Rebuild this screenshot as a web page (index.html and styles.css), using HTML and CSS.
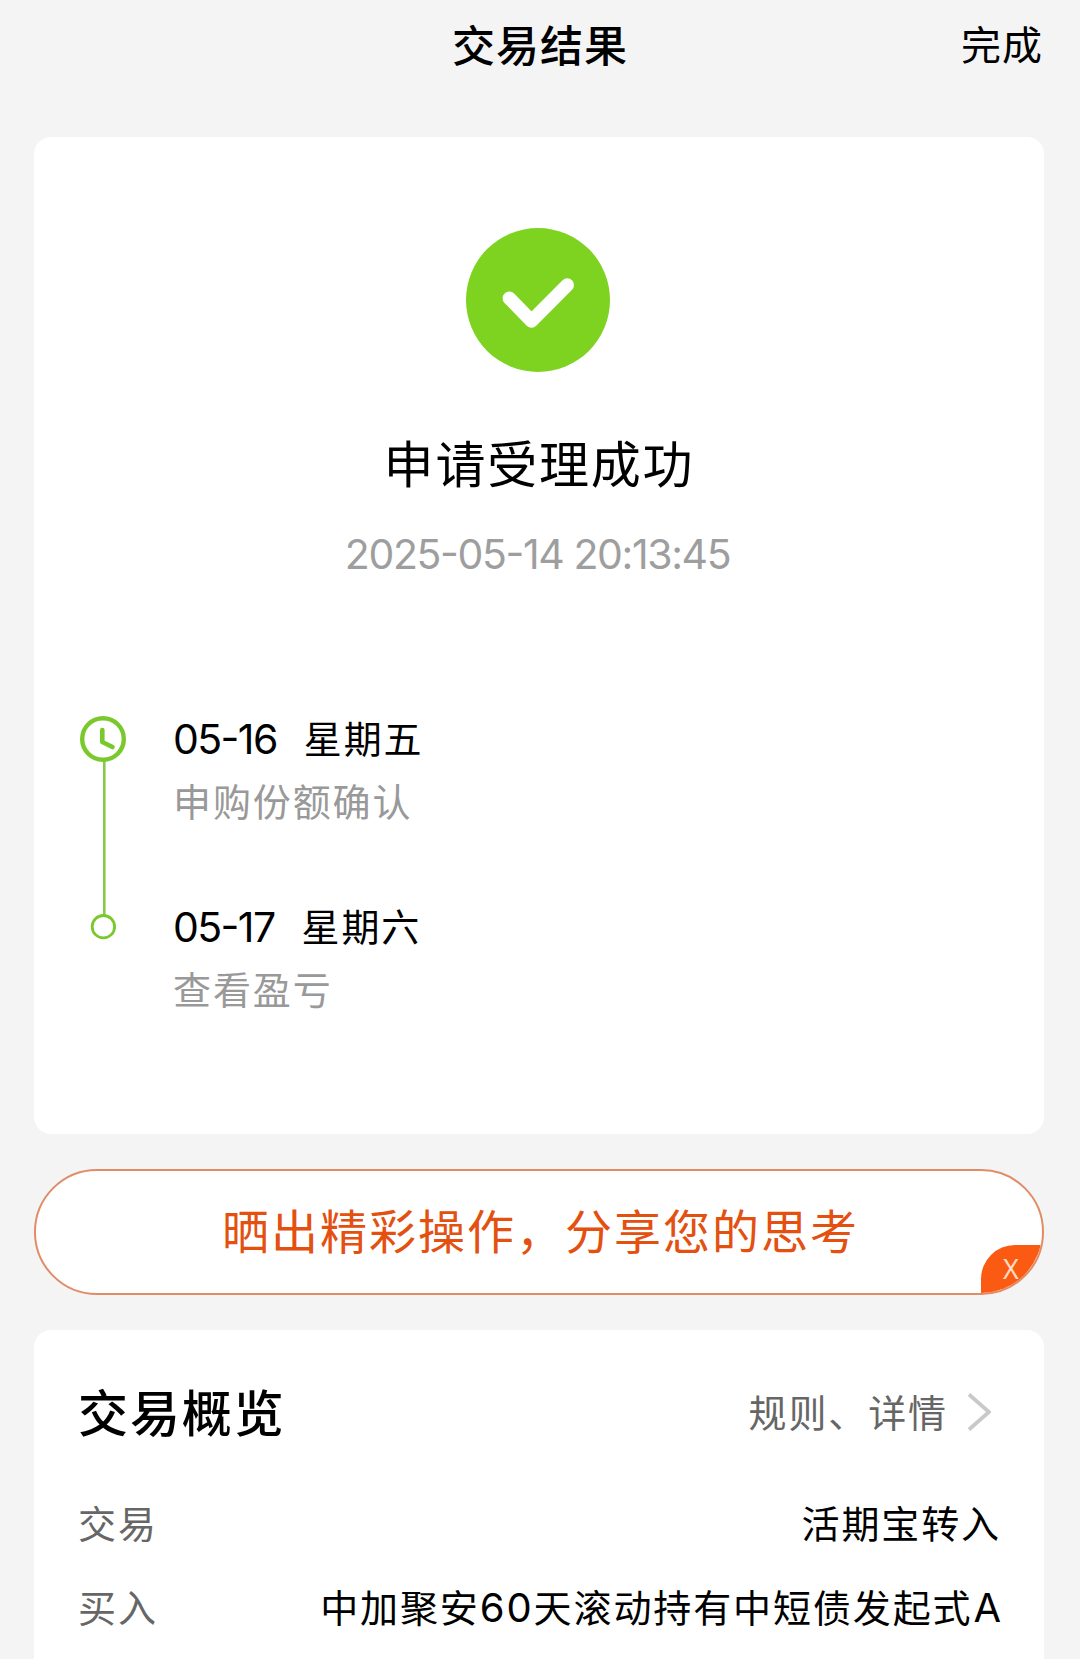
FILE: index.html
```html
<!DOCTYPE html>
<html lang="zh-CN">
<head>
<meta charset="utf-8">
<title>交易结果</title>
<link rel="stylesheet" href="styles.css">
</head>
<body>
<header class="topbar">
  <span></span>
  <h1 class="topbar-title">交易结果</h1>
  <span class="topbar-done">完成</span>
</header>
<main class="content">
  <section class="card result">
    <svg class="result-icon" viewBox="0 0 144 144">
      <circle cx="72" cy="72" r="72" fill="#7ed321"/>
      <path d="M43.3 70.3 65.5 93 101.3 57" fill="none" stroke="#fff" stroke-width="13.4" stroke-linecap="round" stroke-linejoin="round"/>
    </svg>
    <h2 class="result-title">申请受理成功</h2>
    <time class="result-time">2025<span class="dash">-</span>05<span class="dash">-</span>14 20:13:45</time>
    <div class="timeline">
      <svg class="track" viewBox="0 0 48 226">
        <path d="M25.3 46V201" stroke="#86c94c" stroke-width="2.6"/>
        <circle cx="24" cy="24" r="20.8" fill="none" stroke="#79c92c" stroke-width="4.4"/>
        <path d="M23.3 15V27L33.5 32" fill="none" stroke="#79c92c" stroke-width="4.6" stroke-linecap="round" stroke-linejoin="round"/>
        <circle cx="24.4" cy="211.7" r="11.2" fill="#fff" stroke="#79c92c" stroke-width="2.8"/>
      </svg>
      <ol class="steps">
        <li class="step">
          <div class="step-date"><span class="num">05<span class="dash">-</span>16</span><span>星期五</span></div>
          <div class="step-note">申购份额确认</div>
        </li>
        <li class="step">
          <div class="step-date"><span class="num">05<span class="dash">-</span>17</span><span>星期六</span></div>
          <div class="step-note">查看盈亏</div>
        </li>
      </ol>
    </div>
  </section>
  <section class="share">
    <span class="share-text">晒出精彩操作，分享您的思考</span>
    <span class="share-close">X</span>
  </section>
  <section class="card overview">
    <div class="overview-head">
      <h2 class="overview-title">交易概览</h2>
      <div class="overview-link">
        <span>规则、详情</span>
        <svg class="chevron" viewBox="0 0 24 40"><path d="M2 2.500 22 20 2 37.500" fill="none" stroke="#c9c9c9" stroke-width="3.8"/></svg>
      </div>
    </div>
    <div class="row"><span class="label">交易</span><span class="value">活期宝转入</span></div>
    <div class="row"><span class="label">买入</span><span class="value">中加聚安<span class="latin">60</span>天滚动持有中短债发起式<span class="latin last">A</span></span></div>
  </section>
</main>
</body>
</html>
```

FILE: styles.css
```css
* { box-sizing: border-box; }
body {
  margin: 0;
  height: 1659px;
  overflow: hidden;
  background: #f4f4f4;
  color: #000;
  font-family: "Noto Sans CJK SC", sans-serif;
  font-size: 38px;
  letter-spacing: 1.9px;
  white-space: nowrap;
}
h1, h2, ol { margin: 0; padding: 0; font-weight: 400; list-style: none; }

.topbar {
  display: grid;
  grid-template-columns: 1fr auto 1fr;
  align-items: center;
  height: 137px;
  padding: 0 37px 51px 37px;
}
.topbar-title { font-size: 43px; font-weight: 500; letter-spacing: 1px; line-height: 60px; }
.topbar-done { justify-self: end; font-size: 40px; letter-spacing: 1px; line-height: 60px; }

.content { padding: 0 36px 0 34px; }
.card { background: #fff; border-radius: 17px; }

.result {
  display: flex;
  flex-direction: column;
  align-items: center;
  height: 997px;
  padding: 91px 45px 0;
}
.result-icon { width: 144px; height: 144px; margin-right: 2px; }
.result-title { margin-top: 54px; font-size: 50px; line-height: 70px; letter-spacing: 1.8px; }
.result-time {
  margin-top: 33px;
  padding-right: 3px;
  font-family: Inter, sans-serif;
  font-size: 41px;
  line-height: 50px;
  letter-spacing: -1.4px;
  color: #9e9e9e;
}
.dash { position: relative; top: -2px; }
.timeline { display: flex; gap: 46px; align-self: stretch; margin-top: 136px; }
.track { width: 48px; height: 226px; flex: none; }
.steps { display: flex; flex-direction: column; gap: 71px; margin-top: -2px; }
.step-date { display: flex; gap: 27px; line-height: 48px; }
.num {
  padding-top: 2px;
  font-family: Inter, sans-serif;
  font-size: 41px;
  letter-spacing: -1.6px;
}
.step-note { margin-top: 7px; line-height: 60px; color: #999; }

.share {
  position: relative;
  display: flex;
  justify-content: center;
  align-items: center;
  height: 126px;
  margin: 35px 0;
  border: 2px solid #e08c66;
  border-radius: 63px;
  overflow: hidden;
  background: #fff;
  color: #e3500f;
  font-size: 47px;
  letter-spacing: 2px;
}
.share-text { padding: 0 0 8px 3px; }
.share-close {
  position: absolute;
  right: -1px;
  bottom: 0;
  width: 62px;
  height: 48px;
  padding-left: 22px;
  border-top-left-radius: 34px;
  background: #fb5a12;
  color: #ffdcc4;
  font: 27px/48px "Noto Sans", sans-serif;
}

.overview { height: 400px; padding: 40px 43px 0 44px; }
.overview-head { display: flex; justify-content: space-between; align-items: center; height: 80px; margin-bottom: 29px; }
.overview-title { font-size: 50px; font-weight: 500; }
.overview-link { display: flex; align-items: center; gap: 19px; padding-right: 10px; color: #666; }
.chevron { width: 24px; height: 40px; margin-top: 4px; }
.row { display: flex; justify-content: space-between; align-items: center; height: 84px; }
.label { color: #666; }
.latin { font-family: Inter, sans-serif; font-size: 40px; line-height: 1; }
.last { margin: 0 -2px 0 1px; }
```
